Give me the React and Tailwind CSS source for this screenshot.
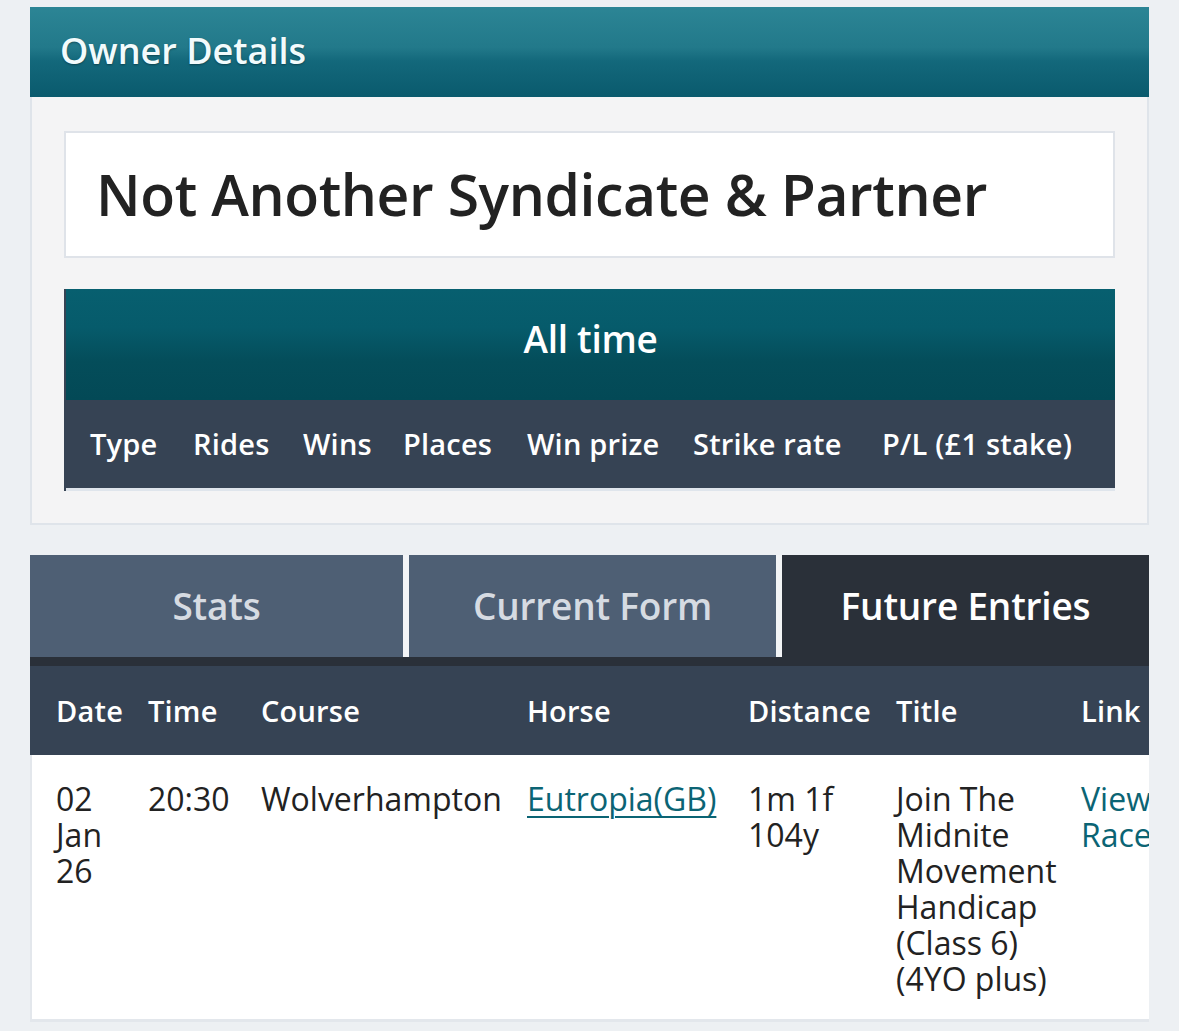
const statCols = [
  { label: "Type", w: "w-[103px]" },
  { label: "Rides", w: "w-[110px]" },
  { label: "Wins", w: "w-[100px]" },
  { label: "Places", w: "w-[124px]" },
  { label: "Win prize", w: "w-[166px]" },
  { label: "Strike rate", w: "w-[189px]" },
  { label: "P/L (£1 stake)", w: "flex-1" },
];

const entryCols = [
  { label: "Date", w: "w-[118px] pl-[26px]" },
  { label: "Time", w: "w-[113px]" },
  { label: "Course", w: "w-[266px]" },
  { label: "Horse", w: "w-[221px]" },
  { label: "Distance", w: "w-[148px]" },
  { label: "Title", w: "w-[185px]" },
  { label: "Link", w: "w-[120px]" },
];

export default function App() {
  return (
    <div
      className="min-h-[1031px] bg-[#edf0f3] pt-[7px] pl-[30px]"
      style={{ fontFamily: '"Open Sans", "Noto Sans", sans-serif' }}
    >
      <div className="w-[1119px]">
        {/* Owner header */}
        <div className="flex h-[90px] items-center bg-[linear-gradient(to_bottom,#2c8595_0%,#22798a_45%,#13687b_60%,#0a5a6d_100%)] pl-[30px] pb-[3px]">
          <h1 className="text-[36px] font-semibold text-[#f2fbfc] [text-shadow:0_1px_2px_rgba(0,0,0,0.35)]">
            Owner Details
          </h1>
        </div>

        {/* Panel */}
        <div className="border-x-2 border-b-2 border-[#dfe4ea] bg-[#f4f4f5] px-[32px] pt-[34px] pb-[32px]">
          <div className="flex h-[127px] items-center border-2 border-[#dfe3e9] bg-white pl-[30px]">
            <h2 className="text-[57px] font-semibold tracking-[-0.4px] text-[#222]">
              Not Another Syndicate &amp; Partner
            </h2>
          </div>

          <div className="mt-[31px] border-l-2 border-[#364354]">
            <div className="flex h-[111px] items-center justify-center bg-[linear-gradient(to_bottom,#075f6f_0%,#065b6b_35%,#044d5a_65%,#034956_100%)] pb-[12px]">
              <span className="text-[37px] font-semibold tracking-[-0.3px] text-white">All time</span>
            </div>
            <div className="flex h-[91px] items-center border-b-[3px] border-[#dfe5ec] bg-[#364354] pl-[24px]">
              {statCols.map((c) => (
                <div key={c.label} className={`${c.w} text-[29px] font-semibold tracking-[0.2px] text-white`}>
                  {c.label}
                </div>
              ))}
            </div>
          </div>
        </div>

        {/* Tabs */}
        <div className="mt-[30px] flex h-[102px] gap-[6px] bg-[#f2f4f6]">
          <div className="flex w-[373px] items-center justify-center bg-[#4e5f74] text-[37px] font-semibold tracking-[-0.2px] text-[#d6dbe2]">
            Stats
          </div>
          <div className="flex w-[367px] items-center justify-center bg-[#4e5f74] text-[37px] font-semibold tracking-[-0.2px] text-[#d6dbe2]">
            Current Form
          </div>
          <div className="flex flex-1 items-center justify-center bg-[#2a3039] text-[37px] font-semibold tracking-[-0.2px] text-white">
            Future Entries
          </div>
        </div>
        <div className="h-[9px] bg-[#2a3039]" />

        {/* Entries table */}
        <div className="overflow-hidden">
          <div className="flex h-[89px] w-[1180px] items-center bg-[#364354]">
            {entryCols.map((c) => (
              <div key={c.label} className={`${c.w} shrink-0 text-[29px] font-semibold tracking-[0.2px] text-white`}>
                {c.label}
              </div>
            ))}
          </div>
          <div className="flex h-[264px] w-[1180px] border-l-2 border-[#e3e7ec] bg-white pt-[26px] text-[32px] leading-[36px] text-[#222]">
            <div className="w-[116px] shrink-0 pl-[24px] pr-[30px]">02 Jan 26</div>
            <div className="w-[113px] shrink-0">20:30</div>
            <div className="w-[266px] shrink-0">Wolverhampton</div>
            <div className="w-[221px] shrink-0">
              <a href="#" className="text-[#0b6474] underline decoration-2 underline-offset-[5px]">
                Eutropia(GB)
              </a>
            </div>
            <div className="w-[148px] shrink-0 pr-[20px]">1m 1f 104y</div>
            <div className="w-[185px] shrink-0 pr-[10px]">
              Join The Midnite Movement Handicap (Class 6) (4YO plus)
            </div>
            <div className="w-[120px] shrink-0 text-[#0b6474]">
              <a href="#">View Race</a>
            </div>
          </div>
          <div className="h-[3px] bg-[#e3e7ec]" />
        </div>
      </div>
    </div>
  );
}
